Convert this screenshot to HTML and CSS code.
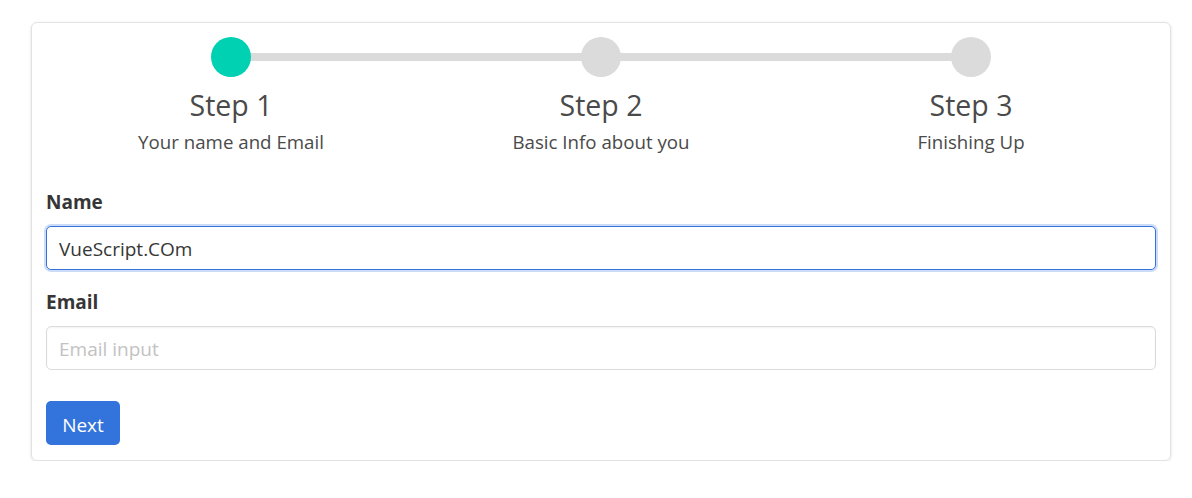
FILE: index.html
```html
<!DOCTYPE html>
<html lang="en">
<head>
<meta charset="utf-8">
<title>Form Wizard</title>
<link rel="stylesheet" href="styles.css">
</head>
<body>
<div class="card">
  <div class="steps">
    <div class="step is-active">
      <div class="marker"></div>
      <div class="step-title">Step 1</div>
      <div class="step-sub">Your name and Email</div>
    </div>
    <div class="step">
      <div class="marker"></div>
      <div class="step-title">Step 2</div>
      <div class="step-sub">Basic Info about you</div>
    </div>
    <div class="step is-last">
      <div class="marker"></div>
      <div class="step-title">Step 3</div>
      <div class="step-sub">Finishing Up</div>
    </div>
  </div>
  <form class="form">
    <label class="label" for="name">Name</label>
    <input class="input is-focused" id="name" type="text" value="VueScript.COm">
    <label class="label" for="email">Email</label>
    <input class="input" id="email" type="email" placeholder="Email input">
    <div class="actions">
      <button class="button" type="button">Next</button>
    </div>
  </form>
</div>
</body>
</html>
```
FILE: styles.css
```css
* { box-sizing: border-box; }
html, body { margin: 0; padding: 0; background: #fff; }
body {
  font-family: "Open Sans", "Noto Sans", "Liberation Sans", sans-serif;
  color: #4a4a4a;
  padding: 22px 21px 0 31px;
}
.card {
  width: 1140px;
  height: 439px;
  border: 1px solid #e2e2e2;
  border-radius: 6px;
  box-shadow: 0 1px 3px rgba(10, 10, 10, 0.12);
  padding: 14px 14px 14px 14px;
}
.steps {
  display: flex;
}
.step {
  flex: 0 0 370px;
  display: flex;
  flex-direction: column;
  align-items: center;
  position: relative;
}
.step::after {
  content: "";
  position: absolute;
  top: 16px;
  left: 50%;
  width: 100%;
  height: 8px;
  background: #dbdbdb;
  z-index: 0;
}
.step.is-last::after { display: none; }
.marker {
  width: 40px;
  height: 40px;
  border-radius: 50%;
  background: #dbdbdb;
  position: relative;
  z-index: 1;
}
.step.is-active .marker { background: #00d1b2; }
.step-title {
  margin-top: 10px;
  font-size: 28.5px;
  line-height: 36px;
  color: #4a4a4a;
}
.step-sub {
  margin-top: 6px;
  font-size: 18.7px;
  line-height: 26px;
  color: #4a4a4a;
}
.form {
  display: flex;
  flex-direction: column;
  margin: 0;
  padding-top: 32px;
}
.label {
  font-weight: 700;
  font-size: 19px;
  line-height: 30px;
  color: #363636;
  margin-bottom: 9px;
}
.input {
  width: 100%;
  height: 44px;
  border: 1px solid #dbdbdb;
  border-radius: 5px;
  padding: 2px 12px 0 12px;
  font-family: inherit;
  font-size: 19px;
  color: #363636;
  background: #fff;
  box-shadow: inset 0 1px 2px rgba(10, 10, 10, 0.05);
  outline: none;
  margin: 0 0 17px 0;
}
.input::placeholder { color: #c2c2c2; }
.input.is-focused {
  border-color: #3273dc;
  box-shadow: 0 0 0 2px rgba(50, 115, 220, 0.25);
}
.actions { padding-top: 14px; }
.button {
  height: 44px;
  width: 74px;
  border: none;
  border-radius: 5px;
  background: #3273dc;
  color: #fff;
  font-family: inherit;
  font-size: 19px;
  padding: 3px 0 0 0;
  cursor: pointer;
}
```
